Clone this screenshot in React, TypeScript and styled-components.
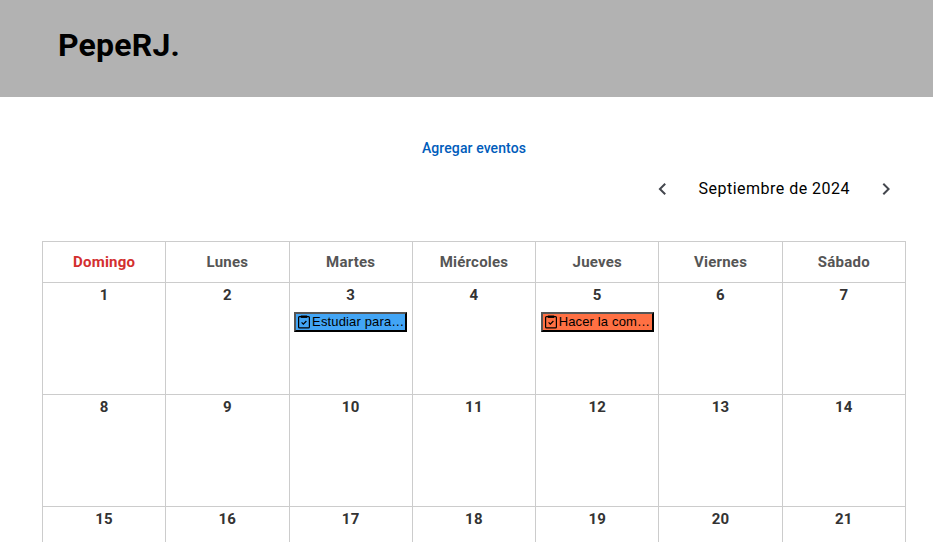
import React from "react";
import styled, { createGlobalStyle } from "styled-components";

const GlobalStyle = createGlobalStyle`
  * { box-sizing: border-box; }
  html, body { margin: 0; background: #fff; overflow: hidden; }
  body { font-family: Roboto, "Liberation Sans", sans-serif; color: #000; }
`;

const Page = styled.div`
  height: 542px;
  overflow: hidden;
`;

const Header = styled.header`
  height: 97px;
  padding: 26px 58px 0;
  background: #b2b2b2;
`;

const Brand = styled.h1`
  margin: 0;
  font-size: 32px;
  line-height: 38px;
  font-weight: 700;
  letter-spacing: 0.2px;
`;

const Main = styled.main`
  padding: 35px 27px 0 42px;
`;

const Actions = styled.div`
  display: flex;
  justify-content: center;
`;

const AddButton = styled.button`
  height: 32px;
  padding: 0;
  border: 0;
  background: none;
  color: #005cbb;
  font: 500 14px/20px Roboto, sans-serif;
  letter-spacing: 0.1px;
`;

const MonthBar = styled.nav`
  display: flex;
  justify-content: flex-end;
  align-items: center;
  height: 50px;
`;

const ArrowButton = styled.button`
  display: grid;
  place-items: center;
  width: 40px;
  height: 48px;
  padding: 0;
  border: 0;
  background: none;
  color: #44474e;
`;

const MonthLabel = styled.span`
  width: 184px;
  padding-left: 0.6px;
  text-align: center;
  font-size: 16px;
  line-height: 24px;
  letter-spacing: 0.48px;
  white-space: nowrap;
`;

const Calendar = styled.section`
  display: grid;
  grid-template-columns: repeat(7, minmax(0, 1fr));
  grid-template-rows: 41px;
  grid-auto-rows: 112px;
  margin-top: 27px;
  border: solid #ccc;
  border-width: 1px 0 0 1px;
`;

const Weekday = styled.div<{ $sunday: boolean }>`
  border: solid #ccc;
  border-width: 0 1px 1px 0;
  text-align: center;
  font-size: 15px;
  line-height: 41px;
  font-weight: 700;
  letter-spacing: 0.22px;
  color: ${(p) => (p.$sunday ? "#d32f2f" : "#555")};
`;

const Day = styled.div`
  padding: 4px 4.6px 0 4.5px;
  border: solid #ccc;
  border-width: 0 1px 1px 0;
  text-align: center;
`;

const DayNumber = styled.div`
  font-size: 15px;
  line-height: 17px;
  font-weight: 700;
  letter-spacing: 0.22px;
  color: #333;
`;

const EventButton = styled.button<{ $color: string }>`
  display: flex;
  align-items: center;
  width: 100%;
  height: 20px;
  margin-top: 8px;
  padding: 0 0 1px 1px;
  border: 2px solid;
  border-color: #555 #000 #000 #555;
  background: ${(p) => p.$color};
  color: #000;
  font: 13px/15px "Liberation Sans", Arial, sans-serif;
  letter-spacing: 0.15px;
`;

const EventTitle = styled.span`
  white-space: nowrap;
`;

const EventSvg = styled.svg`
  flex: none;
  width: 14px;
  height: 14px;
  margin: 1px 1px 0 0;
`;

const ClipboardIcon = () => (
  <EventSvg viewBox="0 0 14 14" fill="none" stroke="#000">
    <rect x="1.6" y="1.6" width="10.8" height="11.3" rx="0.9" strokeWidth="1.2" />
    <path d="M3.8 .5h6.4v2.4H3.8z" fill="#000" stroke="none" />
    <path d="M4.6 7.4l1.7 1.7 3.1-3.1" strokeWidth="1.2" />
  </EventSvg>
);

const Chevron = ({ next = false }: { next?: boolean }) => (
  <svg width="24" height="24" viewBox="0 0 24 24" fill="currentColor">
    <path
      d={
        next
          ? "M10 6L8.59 7.41 13.17 12l-4.58 4.59L10 18l6-6z"
          : "M15.91 7.41L14.5 6l-6 6 6 6 1.41-1.41L11.33 12z"
      }
    />
  </svg>
);

const weekdays = ["Domingo", "Lunes", "Martes", "Miércoles", "Jueves", "Viernes", "Sábado"];
const days = Array.from({ length: 21 }, (_, i) => i + 1);
const events: Record<number, { title: string; color: string }> = {
  3: { title: "Estudiar para…", color: "#42a5f5" },
  5: { title: "Hacer la com…", color: "#ff7043" },
};

export default function App() {
  return (
    <Page>
      <GlobalStyle />
      <Header>
        <Brand>PepeRJ.</Brand>
      </Header>
      <Main>
        <Actions>
          <AddButton>Agregar eventos</AddButton>
        </Actions>
        <MonthBar>
          <ArrowButton aria-label="Mes anterior">
            <Chevron />
          </ArrowButton>
          <MonthLabel>Septiembre de 2024</MonthLabel>
          <ArrowButton aria-label="Mes siguiente">
            <Chevron next />
          </ArrowButton>
        </MonthBar>
        <Calendar>
          {weekdays.map((name, i) => (
            <Weekday key={name} $sunday={i === 0}>
              {name}
            </Weekday>
          ))}
          {days.map((day) => (
            <Day key={day}>
              <DayNumber>{day}</DayNumber>
              {events[day] && (
                <EventButton $color={events[day].color}>
                  <ClipboardIcon />
                  <EventTitle>{events[day].title}</EventTitle>
                </EventButton>
              )}
            </Day>
          ))}
        </Calendar>
      </Main>
    </Page>
  );
}
